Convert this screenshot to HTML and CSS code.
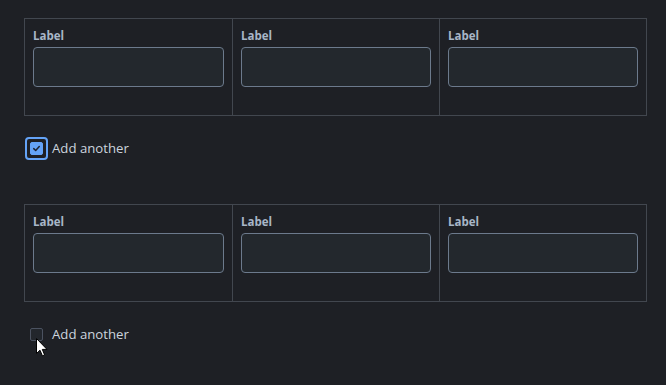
FILE: index.html
```html
<!DOCTYPE html>
<html>
<head>
<meta charset="utf-8">
<link rel="stylesheet" href="styles.css">
</head>
<body>
<div class="page">
  <div class="grid">
    <div class="cell"><label class="lbl">Label</label><div class="input"></div></div>
    <div class="cell"><label class="lbl">Label</label><div class="input"></div></div>
    <div class="cell"><label class="lbl">Label</label><div class="input"></div></div>
  </div>
  <div class="check-row first">
    <span class="ring"><span class="box checked"><svg viewBox="0 0 12 12" width="9" height="9"><path d="M2.3 6.2 L4.9 8.6 L9.7 3.4" fill="none" stroke="#1d2330" stroke-width="2" stroke-linecap="round" stroke-linejoin="round"/></svg></span></span>
    <span class="text">Add another</span>
  </div>
  <div class="grid second">
    <div class="cell"><label class="lbl">Label</label><div class="input"></div></div>
    <div class="cell"><label class="lbl">Label</label><div class="input"></div></div>
    <div class="cell"><label class="lbl">Label</label><div class="input"></div></div>
  </div>
  <div class="check-row last">
    <span class="ring plain"><span class="box"></span></span>
    <span class="text">Add another</span>
    <span class="cursor-wrap"><svg class="cursor" width="12" height="19" viewBox="0 0 12 19"><path d="M0.5 0.5 L0.5 15.5 L4 12.2 L6.4 17.8 L8.6 16.9 L6.3 11.4 L11 11.4 Z" fill="#ffffff" stroke="#000000" stroke-width="1"/></svg></span>
  </div>
</div>
</body>
</html>
```

FILE: styles.css
```css
html, body {
  margin: 0;
  padding: 0;
  background: #1e2025;
}
.page {
  padding: 18px 19px 40px 24px;
  font-family: "Open Sans", "Noto Sans", sans-serif;
}
.grid {
  display: grid;
  grid-template-columns: 207px 207px 207px;
  border: 1px solid #42474f;
}
.grid.second {
  margin-top: 44px;
}
.cell {
  padding: 9px 8px 28px 8px;
  border-left: 1px solid #42474f;
}
.cell:first-child {
  border-left: none;
}
.lbl {
  display: block;
  font-size: 11.5px;
  font-weight: 700;
  line-height: 15px;
  height: 15px;
  color: #a8b6c8;
  margin-bottom: 4px;
}
.input {
  height: 38px;
  background: #23282d;
  border: 1px solid #6c7a8c;
  border-radius: 4px;
}
.check-row {
  display: flex;
  align-items: center;
  height: 24px;
  position: relative;
}
.check-row.first {
  margin-top: 20px;
}
.check-row.last {
  margin-top: 20px;
}
.ring {
  width: 19px;
  height: 19px;
  border: 2px solid #64a3f7;
  border-radius: 4px;
  display: flex;
  align-items: center;
  justify-content: center;
  margin-left: 1px;
}
.ring.plain {
  border-color: transparent;
}
.box {
  width: 11px;
  height: 11px;
  border: 1px solid #4b5260;
  border-radius: 2px;
  background: #22262c;
  display: flex;
  align-items: center;
  justify-content: center;
}
.box.checked {
  background: #64a3f7;
  border-color: #64a3f7;
}
.text {
  margin-left: 4px;
  font-size: 13.2px;
  color: #ccd4de;
}
.cursor-wrap {
  position: absolute;
  left: 12px;
  top: 16px;
  width: 12px;
  height: 19px;
  z-index: 5;
}
.cursor {
  display: block;
  width: 12px;
  height: 19px;
}
```
